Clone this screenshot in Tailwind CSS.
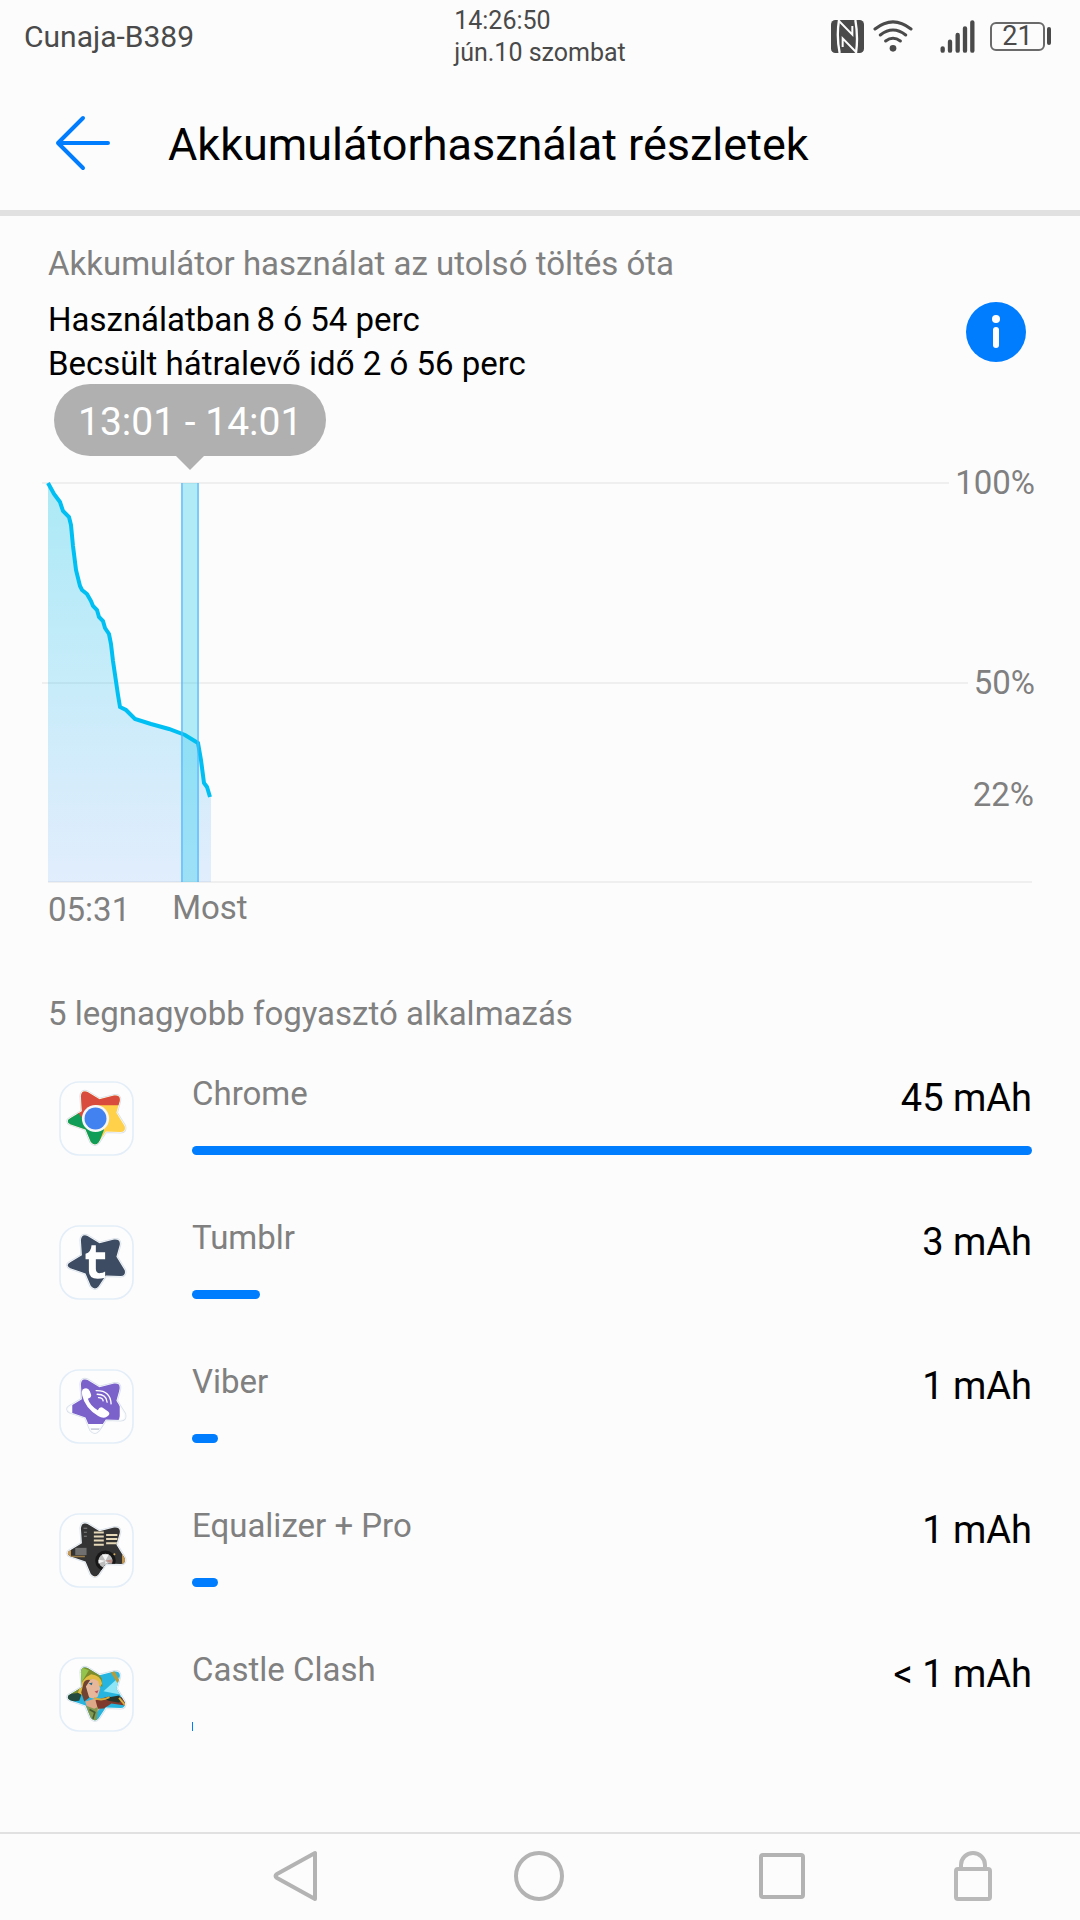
<!DOCTYPE html>
<html lang="hu">
<head>
  <meta charset="UTF-8" />
  <meta name="viewport" content="width=device-width, initial-scale=1.0" />
  <title>Akkumulátorhasználat részletek</title>
  <script src="https://cdn.jsdelivr.net/npm/@tailwindcss/browser@4"></script>
  <style>
    body {
      font-family: Roboto, "Liberation Sans", sans-serif;
    }
  </style>
</head>
<body class="bg-[#fcfcfc] text-black min-h-screen flex flex-col">

  <!-- Shared shapes for the app icons -->
  <svg class="absolute w-0 h-0" aria-hidden="true">
    <defs>
      <path id="star" d="M92 78Q94 58 112 65L148 87L192 76Q212 74 209 92L199 128L224 168Q228 185 212 186L167 184L145 217Q134 230 122 216L106 178L60 162Q44 153 60 144L95 123Z" />
      <clipPath id="star-clip"><use href="#star" /></clipPath>
      <g id="tile">
        <rect x="29" y="35" width="220" height="220" rx="58" fill="#fdfdfd" stroke="#e4eef8" stroke-width="5" />
        <use href="#star" fill="#fff" stroke="#d9e1ea" stroke-width="9" stroke-linejoin="round" />
        <use href="#star" fill="#fff" stroke="#f8fafc" stroke-width="4" />
      </g>
    </defs>
  </svg>

  <!-- Status bar -->
  <div class="grid grid-cols-[1fr_auto_1fr] items-center h-[72px] pl-6 pr-7 text-[#4a4a4a]">
    <span class="text-[30px]">Cunaja-B389</span>
    <div class="text-[25px] leading-8 pt-[2px] pl-1">
      <p>14:26:50</p>
      <p>jún.10 szombat</p>
    </div>
    <div class="flex items-center justify-end">
      <svg class="w-[33px] h-[33px]" viewBox="0 0 99 99">
        <rect width="99" height="99" rx="13" fill="#4a4a4a" />
        <path d="M24 0Q16 50 26 99M75 99Q82 50 73 0" fill="none" stroke="#fcfcfc" stroke-width="7" />
        <path d="M24 3L64 44V18M75 96L35 55V81" fill="none" stroke="#fcfcfc" stroke-width="6" />
      </svg>
      <svg class="w-[40px] h-[33px] ml-[9px]" viewBox="0 0 120 99" fill="none" stroke="#4a4a4a" stroke-width="9" stroke-linecap="round">
        <path d="M6 27Q60 -16 114 27M22 45Q60 15 98 45M38 63Q60 46 82 63" />
        <circle cx="60" cy="85" r="10" fill="#4a4a4a" stroke="none" />
      </svg>
      <svg class="w-[35px] h-[33px] ml-[27px]" viewBox="0 0 105 99" stroke="#4a4a4a" stroke-width="13" stroke-linecap="round">
        <path d="M8 85V92M30 65V92M53 45V92M75 25V92M97 7V92" />
      </svg>
      <div class="w-[55px] h-[29px] ml-[15px] border-2 border-[#6a6a6a] rounded-md flex items-center justify-center text-[27px] leading-none">21</div>
      <div class="w-1 h-[18px] ml-[2px] mr-[1px] rounded-full bg-[#4a4a4a]"></div>
    </div>
  </div>

  <!-- Title bar -->
  <header class="flex items-center h-36 pt-1 pl-[54px] border-b-[6px] border-[#e1e1e1]">
    <button type="button" aria-label="Vissza">
      <svg class="w-14 h-14" viewBox="0 0 56 56" fill="none" stroke="#007dff" stroke-width="4" stroke-linecap="round" stroke-linejoin="round">
        <path d="M54 28H4M29 3L4 28L29 53" />
      </svg>
    </button>
    <h1 class="ml-[58px] pt-1 text-[45px]">Akkumulátorhasználat részletek</h1>
  </header>

  <main class="flex-1 px-12 pt-7">
    <!-- Summary -->
    <h2 class="text-[33px] leading-10 text-[#808080]">Akkumulátor használat az utolsó töltés óta</h2>
    <div class="flex items-start justify-between mt-[14px]">
      <div class="text-[33px] leading-11">
        <p class="flex gap-[6px]"><span>Használatban</span><span>8 ó 54 perc</span></p>
        <p>Becsült hátralevő idő 2 ó 56 perc</p>
      </div>
      <button type="button" aria-label="Információ" class="mt-1 mr-[6px]">
        <svg class="w-[60px] h-[60px]" viewBox="0 0 60 60">
          <circle cx="30" cy="30" r="30" fill="#007dff" />
          <circle cx="30" cy="17" r="4" fill="#fff" />
          <path d="M30 28V43" stroke="#fff" stroke-width="6" stroke-linecap="round" />
        </svg>
      </button>
    </div>

    <!-- Battery level chart -->
    <section class="relative h-[400px] mt-[97px] text-[33px] leading-10 text-[#808080]">
      <div class="absolute -left-[6px] -right-[3px] -top-5 flex items-center gap-[6px]">
        <span class="flex-1 h-[2px] bg-[#efefef]"></span><span>100%</span>
      </div>
      <div class="absolute -left-[6px] -right-[3px] top-[180px] flex items-center gap-[6px]">
        <span class="flex-1 h-[2px] bg-[#efefef]"></span><span>50%</span>
      </div>
      <span class="absolute -right-[2px] top-[292px]">22%</span>
      <div class="absolute inset-x-0 bottom-0 h-[2px] bg-[#efefef]"></div>

      <svg class="absolute left-0 top-0 w-[168px] h-[399px] overflow-visible" viewBox="0 0 168 399">
        <defs>
          <linearGradient id="level" x1="0" y1="0" x2="0" y2="1">
            <stop offset="0" stop-color="#00c3e8" stop-opacity=".32" />
            <stop offset=".5" stop-color="#00b0f0" stop-opacity=".21" />
            <stop offset="1" stop-color="#2d8cff" stop-opacity=".13" />
          </linearGradient>
        </defs>
        <path d="M0 0L6 11L12 19L15 28L21 34L23 42L25 63L28 87L32 103L34 107L39 111L43 118L45 123L49 127L51 134L55 138L57 145L61 151L63 161L65 178L70 212L72 224L78 227L87 236L103 241L121 246L137 252L150 260L153 277L156 300L159 304L163 315V399H0Z" fill="url(#level)" />
        <path d="M0 0L6 11L12 19L15 28L21 34L23 42L25 63L28 87L32 103L34 107L39 111L43 118L45 123L49 127L51 134L55 138L57 145L61 151L63 161L65 178L70 212L72 224L78 227L87 236L103 241L121 246L137 252L150 260L153 277L156 300L159 304L162 314" fill="none" stroke="#00bff3" stroke-width="4" />
        <rect x="133" y="0" width="18" height="399" fill="#00c3e8" fill-opacity=".3" />
        <path d="M134 0V399M150 0V399" stroke="#5ab4ff" stroke-opacity=".6" stroke-width="2" />
      </svg>

      <!-- Selected hour -->
      <div class="absolute left-[6px] -top-[99px] h-[72px] px-6 pt-1 rounded-full bg-[#b0b0b0] text-white text-[39px] flex items-center">
        13:01 - 14:01
        <svg class="absolute left-1/2 -translate-x-1/2 top-full w-7 h-[14px]" viewBox="0 0 28 14"><path d="M0 0H28L14 14Z" fill="#b0b0b0" /></svg>
      </div>
    </section>
    <div class="flex gap-[42px] mt-[5px] text-[33px] leading-10 text-[#808080]">
      <span class="pt-[2px]">05:31</span>
      <span>Most</span>
    </div>

    <!-- Top consumers -->
    <h2 class="mt-16 text-[33px] leading-10 text-[#808080]">5 legnagyobb fogyasztó alkalmazás</h2>
    <ul class="mt-[39px]">
      <li class="flex h-36 pt-2 pl-[11px]">
        <svg class="w-[75px] h-[75px] shrink-0" viewBox="26 32 226 226">
          <use href="#tile" />
          <g clip-path="url(#star-clip)">
            <rect x="30" y="30" width="220" height="220" fill="#ffd04a" />
            <path d="M40 20H240V105H135L96 158L40 60Z" fill="#d94b3d" />
            <path d="M30 90L82 125L106 158L162 178L138 240H30Z" fill="#109d58" />
          </g>
          <circle cx="136" cy="145" r="41" fill="#f7f7f7" />
          <circle cx="136" cy="145" r="33" fill="#4281f0" />
        </svg>
        <div class="flex-1 ml-[58px]">
          <div class="flex justify-between leading-10">
            <span class="-mt-[7px] text-[33px] text-[#808080]">Chrome</span>
            <span class="text-[38px] -mt-[3px]">45 mAh</span>
          </div>
          <div class="h-[9px] mt-7 rounded-full bg-[#007dff]" style="width: 100%"></div>
        </div>
      </li>
      <li class="flex h-36 pt-2 pl-[11px]">
        <svg class="w-[75px] h-[75px] shrink-0" viewBox="26 32 226 226">
          <use href="#tile" />
          <use href="#star" fill="#3d4c62" />
          <path d="M137 93V114H165V135H137V164Q137 178 150 177Q158 177 165 172V191Q116 203 116 170V135H106V119Q123 114 124 93Z" fill="#fff" />
        </svg>
        <div class="flex-1 ml-[58px]">
          <div class="flex justify-between leading-10">
            <span class="-mt-[7px] text-[33px] text-[#808080]">Tumblr</span>
            <span class="text-[38px] -mt-[3px]">3 mAh</span>
          </div>
          <div class="h-[9px] mt-7 rounded-full bg-[#007dff]" style="width: 8.1%"></div>
        </div>
      </li>
      <li class="flex h-36 pt-2 pl-[11px]">
        <svg class="w-[75px] h-[75px] shrink-0" viewBox="26 32 226 226">
          <use href="#tile" />
          <g clip-path="url(#star-clip)">
            <rect x="66" y="50" width="143" height="148" rx="24" fill="#7b61ca" />
            <path d="M122 213H148" stroke="#ccd1db" stroke-width="5" />
          </g>
          <path d="M97 94Q112 84 119 99L123 110Q124 117 113 122Q120 144 143 156Q149 143 160 150L174 160Q183 168 171 175Q160 184 144 174Q104 149 96 112Q93 100 97 94Z" fill="#fff" />
          <path d="M138 97Q181 96 183 137M141 108Q169 108 171 132M145 118Q158 118 159 128" fill="none" stroke="#fff" stroke-width="4" stroke-linecap="round" />
        </svg>
        <div class="flex-1 ml-[58px]">
          <div class="flex justify-between leading-10">
            <span class="-mt-[7px] text-[33px] text-[#808080]">Viber</span>
            <span class="text-[38px] -mt-[3px]">1 mAh</span>
          </div>
          <div class="h-[9px] mt-7 rounded-full bg-[#007dff]" style="width: 3.1%"></div>
        </div>
      </li>
      <li class="flex h-36 pt-2 pl-[11px]">
        <svg class="w-[75px] h-[75px] shrink-0" viewBox="26 32 226 226">
          <use href="#tile" />
          <g clip-path="url(#star-clip)">
            <rect x="30" y="30" width="220" height="220" fill="#343434" />
            <path d="M40 130H62V175H40ZM216 150H240V200H216ZM120 222H150V235H120Z" fill="#c79a52" />
            <path d="M131 91H161M131 103H161M131 115H161M131 128H161M168 98H202M168 110H202M168 123H202" stroke="#e5d8b8" stroke-width="6" />
            <path d="M100 78H111M101 90H110M101 102H110" stroke="#858585" stroke-width="3" />
            <rect x="75" y="137" width="34" height="22" fill="#707070" />
            <path d="M62 163H104" stroke="#9a7c48" stroke-width="4" />
            <circle cx="166" cy="176" r="31" fill="#171717" />
            <circle cx="166" cy="176" r="21" fill="#bdbdbd" />
            <path d="M166 176L155 157H176ZM166 176L181 192L164 198ZM166 176L145 173V184Z" fill="#f4f4f4" />
            <path d="M166 176L187 171L186 184Z" fill="#b98c83" />
            <circle cx="193" cy="156" r="3" fill="#d6b05d" />
          </g>
        </svg>
        <div class="flex-1 ml-[58px]">
          <div class="flex justify-between leading-10">
            <span class="-mt-[7px] text-[33px] text-[#808080]">Equalizer + Pro</span>
            <span class="text-[38px] -mt-[3px]">1 mAh</span>
          </div>
          <div class="h-[9px] mt-7 rounded-full bg-[#007dff]" style="width: 3.1%"></div>
        </div>
      </li>
      <li class="flex h-36 pt-2 pl-[11px]">
        <svg class="w-[75px] h-[75px] shrink-0" viewBox="26 32 226 226">
          <use href="#tile" />
          <g clip-path="url(#star-clip)">
            <rect x="30" y="30" width="220" height="220" fill="#27b5df" />
            <path d="M160 135L210 90V145Z" fill="#8ee5f5" />
            <path d="M180 76L192 72L208 103L202 110Z" fill="#b49b3c" />
            <path d="M85 50L119 66Q145 76 155 97L157 122L112 108L90 145L45 168V120L92 118Z" fill="#7d8c2b" />
            <path d="M90 62L116 72L103 94L92 112Z" fill="#94c34d" />
            <path d="M42 145L96 139L87 164L50 168Z" fill="#254b40" />
            <path d="M83 140Q92 97 123 84Q151 87 156 112L150 122Q129 87 110 107L97 147Z" fill="#e0bc42" />
            <path d="M106 109Q124 90 144 105L150 127L143 151Q130 165 110 147Z" fill="#e7b79c" />
            <path d="M100 110Q106 98 120 101L107 121L117 155L102 166L93 139Z" fill="#704332" />
            <path d="M115 112L127 109L125 117Z" fill="#276b87" />
            <path d="M133 136L145 132L141 142Z" fill="#bf525b" />
            <path d="M105 166L144 155L151 186L133 207L112 189Z" fill="#dca887" />
            <path d="M136 162L175 151L200 158L226 149V178L184 172L161 187L143 188Z" fill="#80392d" />
            <path d="M160 156L207 148L216 159L207 170L175 164Z" fill="#28332c" />
            <path d="M132 155Q154 166 178 153M207 155L226 178" fill="none" stroke="#d7ad3c" stroke-width="6" />
            <path d="M108 179L132 188L143 183L139 229H122Z" fill="#829950" />
            <path d="M118 190L134 199L128 218" fill="none" stroke="#455c32" stroke-width="5" />
          </g>
        </svg>
        <div class="flex-1 ml-[58px]">
          <div class="flex justify-between leading-10">
            <span class="-mt-[7px] text-[33px] text-[#808080]">Castle Clash</span>
            <span class="text-[38px] -mt-[3px]">&lt; 1 mAh</span>
          </div>
          <div class="h-[9px] mt-7 bg-[#007dff]" style="width: 1px"></div>
        </div>
      </li>
    </ul>
  </main>

  <!-- Navigation bar -->
  <nav class="h-[88px] shrink-0 border-t-2 border-[#e1e1e1] grid grid-cols-[594fr_360fr_126fr] items-center pb-[2px]">
    <div class="flex justify-between pl-[46%] pr-[5%]">
      <button type="button" aria-label="Vissza">
        <svg class="w-[45px] h-[52px]" viewBox="0 0 45 52" fill="none" stroke="#b3b3b3" stroke-width="4" stroke-linejoin="round"><path d="M42 3V49L4 28Q1 26 4 24Z" /></svg>
      </button>
      <button type="button" aria-label="Kezdőképernyő">
        <svg class="w-[50px] h-[50px]" viewBox="0 0 50 50" fill="none" stroke="#b3b3b3" stroke-width="4"><circle cx="25" cy="25" r="23" /></svg>
      </button>
    </div>
    <button type="button" aria-label="Legutóbbiak" class="justify-self-center pl-4">
      <svg class="w-[46px] h-[46px]" viewBox="0 0 46 46" fill="none" stroke="#b3b3b3" stroke-width="4"><rect x="2" y="2" width="42" height="42" rx="2" /></svg>
    </button>
    <button type="button" aria-label="Zárolás" class="justify-self-start">
      <svg class="w-[38px] h-[50px]" viewBox="0 0 38 50" fill="none" stroke="#b9b9b9" stroke-width="4"><rect x="2" y="18" width="34" height="30" rx="2" /><path d="M7 18V14A12 12 0 0 1 31 14V18" /></svg>
    </button>
  </nav>
</body>
</html>
